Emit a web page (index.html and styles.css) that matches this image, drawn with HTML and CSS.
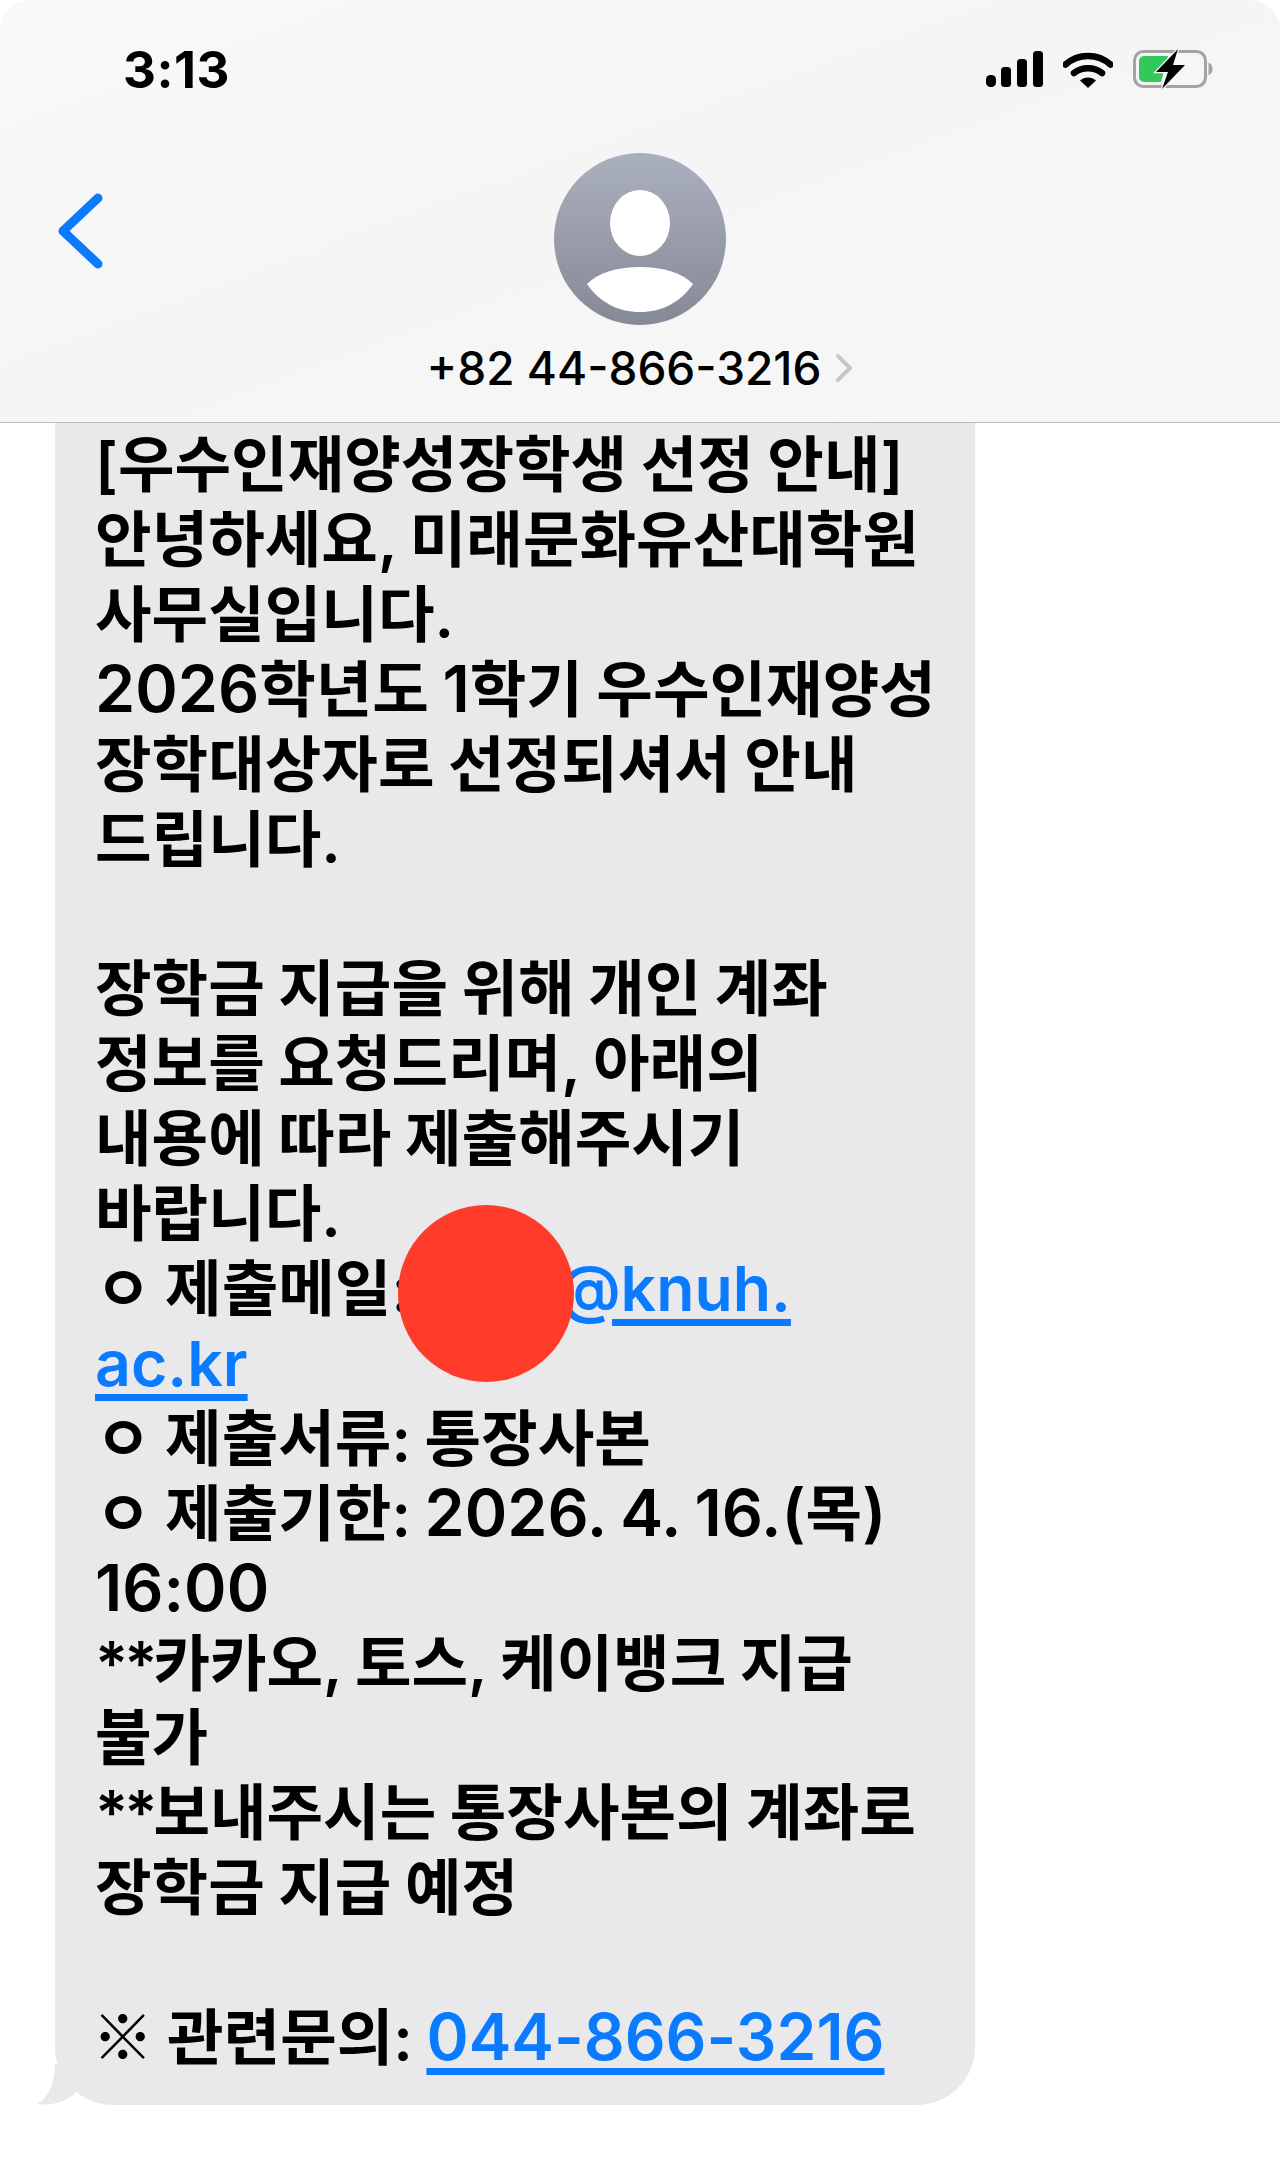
FILE: index.html
```html
<!DOCTYPE html>
<html lang="ko">
<head>
    <meta charset="UTF-8">
    <meta name="viewport" content="width=device-width, initial-scale=1.0">
    <title>메시지</title>
    <link rel="stylesheet" href="styles.css">
</head>
<body>

    <div class="screen">
        <!-- 상단 헤더 -->
        <header class="header">
            <div class="status-bar">
                <span class="time">3:13</span>
                <div class="status-icons">
                    <svg class="icon-signal" width="57" height="36" viewBox="0 0 57 36">
                        <rect x="0" y="24" width="10" height="12" rx="4.5"/>
                        <rect x="15" y="16" width="10" height="20" rx="3.5"/>
                        <rect x="31" y="8" width="10" height="28" rx="3.5"/>
                        <rect x="47" y="0" width="10" height="36" rx="3.5"/>
                    </svg>
                    <svg class="icon-wifi" width="50" height="37" viewBox="0 0 50 37">
                        <path d="M2.5 13.5C15 2 35 2 47.5 13.5" fill="none" stroke="#000" stroke-width="6.5" stroke-linecap="round"/>
                        <path d="M11 22C18.500 15.500 31.500 15.500 39 22" fill="none" stroke="#000" stroke-width="6.500" stroke-linecap="round"/>
                        <path d="M17 29.500C21.500 25.500 28.500 25.500 33 29.500L25 37Z"/>
                    </svg>
                    <svg class="icon-battery" width="80" height="40" viewBox="0 0 80 40">
                        <rect x="1.500" y="2.500" width="71" height="35" rx="9" fill="none" stroke="#a3a3a3" stroke-width="3"/>
                        <path d="M6 12a5 5 0 0 1 5-5h24L28 33H11a5 5 0 0 1-5-5Z" fill="#34c759"/>
                        <path d="M75.500 13.500c3 1.500 4 3.500 4 6.500s-1 5-4 6.500Z" fill="#a3a3a3"/>
                        <path d="M45 0 23 23h12l-6 17 23-24H40Z" stroke="#f6f6f6" stroke-width="2.500" paint-order="stroke"/>
                    </svg>
                </div>
            </div>
            <div class="nav">
                <svg class="back" width="46" height="80" viewBox="0 0 46 80">
                    <path d="M40 7 5 40l35 33" fill="none" stroke="#0a7aff" stroke-width="9" stroke-linecap="round" stroke-linejoin="round"/>
                </svg>
                <div class="contact">
                    <svg class="avatar" width="172" height="172" viewBox="0 0 172 172">
                        <defs>
                            <linearGradient id="avatar-bg" x1="0" y1="0" x2="0" y2="1">
                                <stop offset="0" stop-color="#abb0be"/>
                                <stop offset="1" stop-color="#858997"/>
                            </linearGradient>
                        </defs>
                        <circle cx="86" cy="86" r="86" fill="url(#avatar-bg)"/>
                        <ellipse cx="86" cy="70" rx="30" ry="33" fill="#fff"/>
                        <path d="M33 131C45 119 65 114 86 114s41 5 53 17C127 149 108 159 86 159S45 149 33 131Z" fill="#fff"/>
                    </svg>
                    <div class="contact-name">
                        <span>+82 44-866-3216</span>
                        <svg width="18" height="30" viewBox="0 0 18 30">
                            <path d="M3 3 15 15 3 27" fill="none" stroke="#c8c8c8" stroke-width="4" stroke-linecap="round" stroke-linejoin="round"/>
                        </svg>
                    </div>
                </div>
            </div>
        </header>

        <!-- 메시지 말풍선 -->
        <div class="bubble">
            [우수인재양성장학생 선정 안내]<br>
            안녕하세요, 미래문화유산대학원<br>
            사무실입니다.<br>
            <span class="latin">2026</span>학년도 <span class="latin">1</span>학기 우수인재양성<br>
            장학대상자로 선정되셔서 안내<br>
            드립니다.<br>
            <br>
            장학금 지급을 위해 개인 계좌<br>
            정보를 요청드리며, 아래의<br>
            내용에 따라 제출해주시기<br>
            바랍니다.<br>
            ㅇ 제출메일: <a class="mail" href="#"><span class="hidden-part">xxx</span>@knuh.<br>ac.kr</a><br>
            ㅇ 제출서류: 통장사본<br>
            ㅇ 제출기한: <span class="latin">2026. 4. 16.(</span>목<span class="latin">)</span><br>
            <span class="latin">16:00</span><br>
            <span class="stars">**</span>카카오, 토스, 케이뱅크 지급<br>
            불가<br>
            <span class="stars">**</span>보내주시는 통장사본의 계좌로<br>
            장학금 지급 예정<br>
            <br>
            <span class="mark">※</span> 관련문의: <a class="phone" href="#">044-866-3216</a>
            <svg class="tail" width="40" height="42" viewBox="0 0 40 42">
                <path d="M18 0C18 16 12 34 0 40 14 42 30 38 39 28L40 0Z" fill="#e9e9eb"/>
            </svg>
        </div>

        <!-- 가림 표시 -->
        <div class="redact"></div>
    </div>

</body>
</html>
```

FILE: styles.css
```css
* {
    margin: 0;
    padding: 0;
    box-sizing: border-box;
}

body {
    background-color: #ffffff;
    font-family: Inter, "Noto Sans CJK KR", sans-serif;
    color: #000000;
    overflow: hidden;
}

.screen {
    position: relative;
    height: 2158px;
}

.header {
    height: 423px;
    background: linear-gradient(160deg, #f8f9fa, #f5f5f5 45%, #f7f7f7);
    border-bottom: 1px solid #b9b9b9;
    border-radius: 30px 30px 0 0;
}

.status-bar {
    display: flex;
    justify-content: space-between;
    align-items: center;
    height: 138px;
    padding: 0 67px 0 123px;
}

.time {
    font-size: 51px;
    font-weight: 700;
    letter-spacing: 0.5px;
}

.status-icons {
    display: flex;
    align-items: center;
    gap: 20px;
}

.nav {
    display: grid;
    grid-template-columns: 1fr auto 1fr;
    padding: 15px 0 0 58px;
    margin-right: 58px;
}

.back {
    margin-top: 38px;
}

.contact {
    display: flex;
    flex-direction: column;
    align-items: center;
    gap: 16px;
}

.avatar {
    display: block;
}

.contact-name {
    display: flex;
    align-items: center;
    gap: 14px;
    font-size: 46px;
    line-height: 54px;
    font-weight: 500;
}

.bubble {
    position: relative;
    width: 920px;
    margin-left: 55px;
    padding: 5px 28px 29px 40px;
    background-color: #e9e9eb;
    border-radius: 0 0 58px 58px;
    font-size: 61.5px;
    line-height: 74.9px;
    font-weight: 600;
    word-spacing: -2px;
    white-space: nowrap;
}

.bubble a {
    color: #0a7aff;
    text-decoration: underline;
    text-decoration-thickness: 7px;
    text-underline-offset: 8px;
}

.latin {
    font-size: 64.5px;
    line-height: 1;
}

.bubble .mail {
    font-size: 62.5px;
    line-height: 1;
}

.bubble .phone {
    font-size: 64px;
    line-height: 1;
}

.stars {
    letter-spacing: -4px;
}

.mark {
    font-family: "Noto Sans CJK KR", sans-serif;
    line-height: 1;
    margin-left: -3px;
}

.hidden-part {
    letter-spacing: 9px;
}

.tail {
    position: absolute;
    left: -18px;
    bottom: -1px;
}

.redact {
    position: absolute;
    left: 398px;
    top: 1205px;
    width: 176px;
    height: 177px;
    border-radius: 50%;
    background-color: #ff3b2a;
}
```
